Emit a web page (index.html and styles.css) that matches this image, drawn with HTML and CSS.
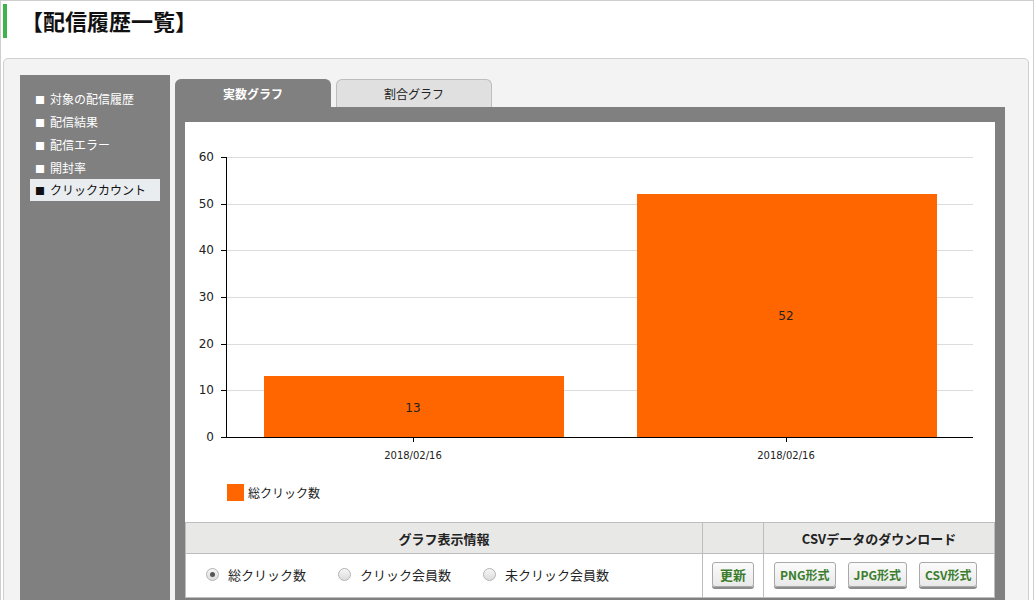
FILE: index.html
```html
<!DOCTYPE html>
<html lang="ja">
<head>
    <meta charset="UTF-8">
    <title>配信履歴一覧</title>
    <link rel="stylesheet" href="styles.css">
</head>
<body>
<div id="page">
    <h1 class="pageTitle">【配信履歴一覧】</h1>

    <div id="mainBox">
        <ul class="sideMenu">
            <li>対象の配信履歴</li>
            <li>配信結果</li>
            <li>配信エラー</li>
            <li>開封率</li>
            <li class="current">クリックカウント</li>
        </ul>

        <div id="graphArea">
            <div class="tabs">
                <div class="tab active">実数グラフ</div>
                <div class="tab">割合グラフ</div>
            </div>
            <div class="tabBody">
                <div class="graphBox">
                    <svg class="chart" width="810" height="345" viewBox="0 0 810 345">
                        <!-- grid lines -->
                        <g stroke="#dcdcdc" stroke-width="1">
                            <line x1="41" y1="35.5" x2="788" y2="35.5"/>
                            <line x1="41" y1="82.5" x2="788" y2="82.5"/>
                            <line x1="41" y1="128.5" x2="788" y2="128.5"/>
                            <line x1="41" y1="175.5" x2="788" y2="175.5"/>
                            <line x1="41" y1="222.5" x2="788" y2="222.5"/>
                            <line x1="41" y1="268.5" x2="788" y2="268.5"/>
                        </g>
                        <!-- bars -->
                        <rect x="79" y="254" width="300" height="61" fill="#ff6600"/>
                        <rect x="452" y="72" width="300" height="243" fill="#ff6600"/>
                        <!-- axes -->
                        <g stroke="#000" stroke-width="1">
                            <line x1="41.5" y1="35" x2="41.5" y2="315"/>
                            <line x1="41" y1="315.5" x2="788" y2="315.5"/>
                            <line x1="36" y1="35.5" x2="41" y2="35.5"/>
                            <line x1="36" y1="82.5" x2="41" y2="82.5"/>
                            <line x1="36" y1="128.5" x2="41" y2="128.5"/>
                            <line x1="36" y1="175.5" x2="41" y2="175.5"/>
                            <line x1="36" y1="222.5" x2="41" y2="222.5"/>
                            <line x1="36" y1="268.5" x2="41" y2="268.5"/>
                            <line x1="36" y1="315.5" x2="41" y2="315.5"/>
                            <line x1="228.5" y1="315" x2="228.5" y2="320"/>
                            <line x1="601.5" y1="315" x2="601.5" y2="320"/>
                        </g>
                        <g class="yLabels" text-anchor="end">
                            <text x="29" y="39">60</text>
                            <text x="29" y="86">50</text>
                            <text x="29" y="132">40</text>
                            <text x="29" y="179">30</text>
                            <text x="29" y="226">20</text>
                            <text x="29" y="272">10</text>
                            <text x="29" y="319">0</text>
                        </g>
                        <g class="xLabels" text-anchor="middle">
                            <text x="228" y="337">2018/02/16</text>
                            <text x="601" y="337">2018/02/16</text>
                        </g>
                        <g class="barLabels" text-anchor="middle">
                            <text x="228" y="290">13</text>
                            <text x="601" y="198">52</text>
                        </g>
                    </svg>
                    <div class="legend">
                        <span class="legendMark"></span>総クリック数
                    </div>

                    <table class="infoTable">
                        <colgroup>
                            <col class="colInfo">
                            <col class="colUpdate">
                            <col class="colCsv">
                        </colgroup>
                        <tr>
                            <th>グラフ表示情報</th>
                            <th></th>
                            <th>CSVデータのダウンロード</th>
                        </tr>
                        <tr>
                            <td>
                                <div class="radios">
                                    <label class="radio checked"><span class="dot"></span>総クリック数</label>
                                    <label class="radio"><span class="dot"></span>クリック会員数</label>
                                    <label class="radio"><span class="dot"></span>未クリック会員数</label>
                                </div>
                            </td>
                            <td class="center"><button class="btn update">更新</button></td>
                            <td>
                                <div class="csvButtons">
                                    <button class="btn">PNG形式</button>
                                    <button class="btn">JPG形式</button>
                                    <button class="btn">CSV形式</button>
                                </div>
                            </td>
                        </tr>
                    </table>
                </div>
            </div>
        </div>
    </div>
</div>
</body>
</html>
```

FILE: styles.css
```css
html, body {
    margin: 0;
    padding: 0;
    background: #fff;
}

body {
    font-family: "Noto Sans CJK JP", "Noto Sans", sans-serif;
    font-size: 12px;
    color: #222;
}

#page {
    box-sizing: border-box;
    width: 1034px;
    height: 600px;
    overflow: hidden;
    border: 1px solid #cfcfcf;
    border-bottom: none;
    padding: 3px 4px 0 2px;
}

.pageTitle {
    margin: 0;
    height: 34px;
    line-height: 32px;
    border-left: 4px solid #3cb44a;
    padding-left: 14px;
    font-size: 22px;
    font-weight: bold;
    color: #111;
}

#mainBox {
    display: flex;
    margin-top: 20px;
    background: #f3f3f3;
    border: 1px solid #cfcfcf;
    border-radius: 5px;
    padding: 16px 22px 0 16px;
    height: 600px;
}

.sideMenu {
    list-style: none;
    margin: 0 5px 0 0;
    padding: 12px 0 0;
    width: 150px;
    background: #808080;
}

.sideMenu li {
    margin: 0 10px;
    padding-left: 5px;
    height: 23px;
    line-height: 23px;
    color: #fff;
}

.sideMenu li::before {
    content: "■";
    font-size: 10px;
    margin-right: 5px;
}

.sideMenu li.current {
    background: #e9edf0;
    color: #111;
    height: 22px;
    line-height: 22px;
}

#graphArea {
    width: 830px;
    padding-top: 4px;
}

.tabs {
    display: flex;
    gap: 5px;
}

.tab {
    box-sizing: border-box;
    width: 156px;
    height: 28px;
    line-height: 27px;
    text-align: center;
    background: #e0e0e0;
    border: 1px solid #bdbdbd;
    border-bottom: none;
    border-radius: 6px 6px 0 0;
    color: #222;
}

.tab.active {
    background: #808080;
    border-color: #808080;
    color: #fff;
    font-weight: bold;
}

.tabBody {
    background: #808080;
    padding: 15px 10px 10px;
}

.graphBox {
    background: #fff;
}

.chart {
    display: block;
}

.chart text {
    font-family: "DejaVu Sans", Verdana, sans-serif;
    fill: #222;
}

.yLabels text {
    font-size: 12px;
}

.xLabels text {
    font-size: 10px;
}

.barLabels text {
    font-size: 12px;
}

.legend {
    display: flex;
    align-items: center;
    height: 17px;
    margin: 17px 0 0 42px;
    padding-bottom: 21px;
}

.legendMark {
    width: 17px;
    height: 17px;
    background: #ff6600;
    margin-right: 4px;
}

.infoTable {
    width: 810px;
    table-layout: fixed;
    border-collapse: collapse;
}

col.colInfo {
    width: 517px;
}

col.colUpdate {
    width: 61px;
}

.infoTable th,
.infoTable td {
    border: 1px solid #bdbdbd;
    padding: 0;
}

.infoTable th {
    height: 30px;
    background: #e8e8e6;
    font-size: 13px;
    font-weight: bold;
    color: #222;
}

.infoTable td {
    height: 41px;
    padding-bottom: 2px;
}

.center {
    text-align: center;
}

.radios {
    display: flex;
    padding-left: 20px;
}

.radio {
    display: inline-flex;
    align-items: center;
    margin-right: 32px;
    font-size: 13px;
    color: #222;
}

.dot {
    box-sizing: border-box;
    width: 13px;
    height: 13px;
    border: 1px solid #b5b5b5;
    border-radius: 50%;
    background: linear-gradient(#f6f6f6, #dcdcdc);
    margin-right: 9px;
    position: relative;
}

.radio.checked .dot::after {
    content: "";
    position: absolute;
    left: 3px;
    top: 3px;
    width: 5px;
    height: 5px;
    border-radius: 50%;
    background: #555;
}

.csvButtons {
    display: flex;
    gap: 12px;
    padding-left: 10px;
}

.btn {
    height: 25px;
    padding: 0 5px;
    font-family: "Noto Sans CJK JP", sans-serif;
    font-size: 12px;
    font-weight: bold;
    color: #3b7d2c;
    background: linear-gradient(#fbfbfb, #e9e9e9);
    border: 1px solid #a9a9a9;
    border-radius: 3px;
    box-shadow: 0 2px 0 #8c8c8c;
    vertical-align: middle;
}

.btn.update {
    font-size: 13px;
    padding: 0 7px;
}
```
